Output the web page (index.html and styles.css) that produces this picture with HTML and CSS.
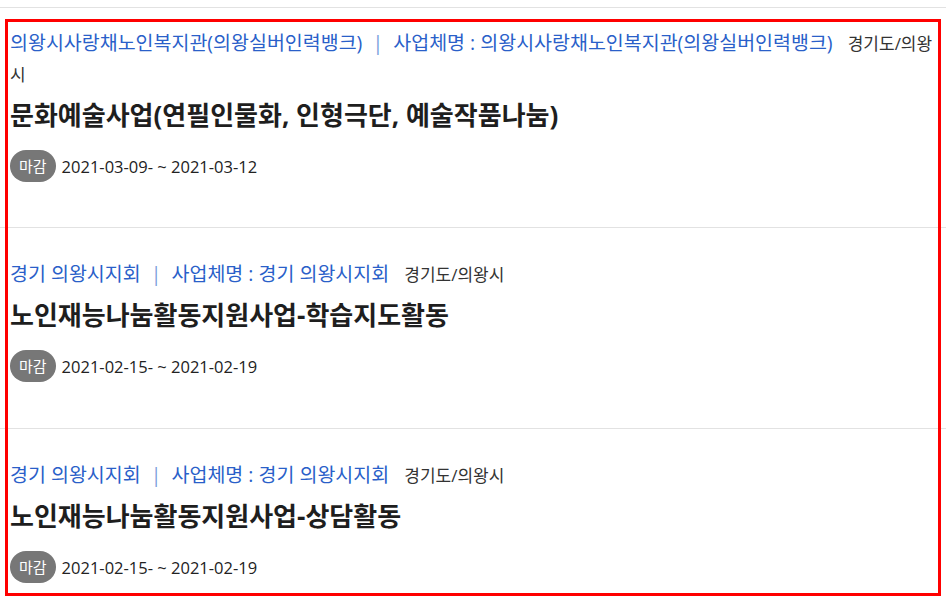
FILE: index.html
```html
<!DOCTYPE html>
<html lang="ko">
<head>
    <meta charset="UTF-8">
    <meta name="viewport" content="width=device-width, initial-scale=1.0">
    <title>사업 목록</title>
    <link rel="stylesheet" href="styles.css">
</head>
<body>
    <ul class="job-list">
        <li class="job-item">
            <p class="job-org">
                <span class="org">의왕시사랑채노인복지관(의왕실버인력뱅크)</span>
                <span class="sep">|</span>
                <span class="org">사업체명 : 의왕시사랑채노인복지관(의왕실버인력뱅크)</span>
                <span class="region">경기도/의왕시</span>
            </p>
            <h2 class="job-title">문화예술사업(연필인물화, 인형극단, 예술작품나눔)</h2>
            <div class="job-date">
                <span class="badge">마감</span>
                <span>2021-03-09- ~ 2021-03-12</span>
            </div>
        </li>
        <li class="job-item">
            <p class="job-org">
                <span class="org">경기 의왕시지회</span>
                <span class="sep">|</span>
                <span class="org">사업체명 : 경기 의왕시지회</span>
                <span class="region">경기도/의왕시</span>
            </p>
            <h2 class="job-title">노인재능나눔활동지원사업-학습지도활동</h2>
            <div class="job-date">
                <span class="badge">마감</span>
                <span>2021-02-15- ~ 2021-02-19</span>
            </div>
        </li>
        <li class="job-item">
            <p class="job-org">
                <span class="org">경기 의왕시지회</span>
                <span class="sep">|</span>
                <span class="org">사업체명 : 경기 의왕시지회</span>
                <span class="region">경기도/의왕시</span>
            </p>
            <h2 class="job-title">노인재능나눔활동지원사업-상담활동</h2>
            <div class="job-date">
                <span class="badge">마감</span>
                <span>2021-02-15- ~ 2021-02-19</span>
            </div>
        </li>
    </ul>

    <div class="highlight"></div>
</body>
</html>
```

FILE: styles.css
```css
body {
    margin: 0;
    background-color: #fff;
    color: #222;
    font-family: 'Open Sans', 'Noto Sans CJK KR', sans-serif;
    overflow: hidden;
}
.job-list {
    list-style: none;
    margin: 7px 0 0 0;
    padding: 0;
    border-top: 1px solid #e2e2e2;
}
.job-item {
    padding: 31px 8px 46px 10px;
    border-bottom: 1px solid #e2e2e2;
}
.job-item:first-child {
    padding-top: 20px;
    padding-bottom: 45px;
}
.job-org {
    margin: 0;
    font-size: 19.5px;
    line-height: 30px;
    color: #2a5fc9;
}
.sep {
    color: #7a9fdc;
    margin: 0 5px;
}
.region {
    margin-left: 10px;
    font-size: 17px;
    color: #333;
}
.job-title {
    margin: 7px 0 0 0;
    font-size: 26px;
    line-height: 36px;
    font-weight: bold;
    color: #1e1e1e;
}
.job-date {
    display: flex;
    align-items: center;
    gap: 6px;
    margin-top: 17px;
    font-size: 16.5px;
    color: #222;
}
.badge {
    display: inline-block;
    height: 32px;
    line-height: 32px;
    padding: 0 9px;
    border-radius: 16px;
    background-color: #777;
    color: #fff;
    font-size: 15px;
}
.highlight {
    position: absolute;
    left: 5px;
    top: 19px;
    width: 936px;
    height: 577px;
    box-sizing: border-box;
    border: 3px solid #f00;
    pointer-events: none;
}
```
